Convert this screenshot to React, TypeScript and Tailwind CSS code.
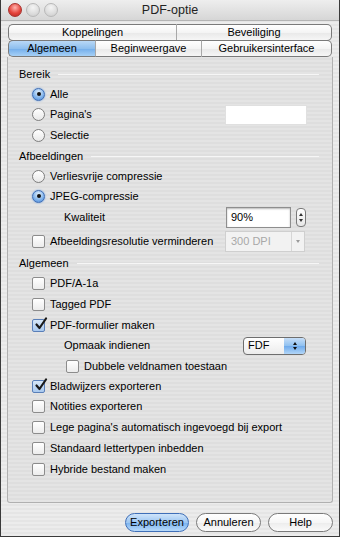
import React from 'react';

const font = { fontFamily: '"Liberation Sans", Arial, sans-serif' };

const Radio = ({ on }: { on?: boolean }) => (
  <span
    className={`w-[13px] h-[13px] rounded-full border flex items-center justify-center shrink-0 ${
      on
        ? 'border-[#3e6db5] bg-[radial-gradient(circle_at_50%_30%,#e3f0fc_0%,#7fb2ea_60%,#4a86d8_100%)] shadow-[0_0_2px_#6aa0e6]'
        : 'border-[#7d7d7d] bg-[linear-gradient(#ffffff,#e8e8e8)]'
    }`}
  >
    {on && <span className="w-[4px] h-[4px] rounded-full bg-[#111]" />}
  </span>
);

const Check = ({ on }: { on?: boolean }) => (
  <span
    className={`w-[13px] h-[13px] rounded-[2px] border shrink-0 relative ${
      on ? 'border-[#5a7fb8] bg-[linear-gradient(#d8e8f8,#a8c8ee)]' : 'border-[#8c8c8c] bg-[linear-gradient(#ffffff,#ececec)]'
    }`}
  >
    {on && (
      <svg viewBox="0 0 14 14" className="absolute left-[1px] -top-[3px] w-[14px] h-[14px]">
        <path d="M2.5 7.5 L5.5 11 L12 1.5" fill="none" stroke="#1a1a1a" strokeWidth="2.2" strokeLinecap="round" strokeLinejoin="round" />
      </svg>
    )}
  </span>
);

const Group = ({ label }: { label: string }) => (
  <div className="h-[20px] flex items-center pl-[11px] pr-[13px] gap-2">
    <span className="text-[11px] text-black">{label}</span>
    <span className="flex-1 h-px bg-[#c4c4c4] border-b border-[#f6f6f6]" />
  </div>
);

const Row = ({ h, children }: { h: string; children: React.ReactNode }) => (
  <div className={`${h} flex items-center pl-[24px] text-[11px] text-black`}>{children}</div>
);

const Tab = ({ label, w, sel, first, last }: { label: string; w: string; sel?: boolean; first?: boolean; last?: boolean }) => (
  <div
    className={`${w} h-full flex items-center justify-center text-[11px] text-black border-y border-[#7a7a7a] ${
      first ? 'border-l rounded-l-[5px]' : 'border-l border-l-[#a8a8a8]'
    } ${last ? 'border-r rounded-r-[5px]' : ''} ${
      sel
        ? 'bg-[linear-gradient(#b9d8f6_0%,#8ebfee_50%,#72adea_51%,#a6d0f6_100%)]'
        : 'bg-[linear-gradient(#ffffff_0%,#f4f4f4_50%,#e8e8e8_51%,#f6f6f6_100%)]'
    }`}
  >
    {label}
  </div>
);

const Btn = ({ label, w, blue }: { label: string; w: string; blue?: boolean }) => (
  <div
    className={`${w} h-[19px] rounded-full border flex items-center justify-center text-[11px] text-black ${
      blue
        ? 'border-[#3f6fb8] bg-[linear-gradient(#cfe4fa_0%,#9cc6f2_50%,#7ab2ee_51%,#b8dafa_100%)]'
        : 'border-[#7a7a7a] bg-[linear-gradient(#ffffff_0%,#f6f6f6_50%,#ececec_51%,#fafafa_100%)]'
    }`}
  >
    {label}
  </div>
);

export default function App() {
  return (
    <div
      style={font}
      className="w-[340px] h-[537px] border border-t-0 border-[#3a3a3a] bg-[repeating-linear-gradient(0deg,#ececec_0px,#ececec_2px,#e5e5e5_2px,#e5e5e5_4px)] flex flex-col overflow-hidden"
    >
      {/* title bar */}
      <div className="h-[21px] shrink-0 relative flex items-center justify-center bg-[linear-gradient(#eeeeee,#d6d6d6)] border-b border-[#b4b4b4]">
        <div className="absolute left-[7px] top-[3px] flex gap-[4px]">
          <span className="w-[14px] h-[14px] rounded-full border border-[#a8322e] bg-[radial-gradient(circle_at_50%_30%,#ffb3ad_0%,#e5453d_55%,#b52620_100%)]" />
          <span className="w-[14px] h-[14px] rounded-full border border-[#b8b8b8] bg-[radial-gradient(circle_at_50%_30%,#f4f4f4_0%,#dcdcdc_60%,#c8c8c8_100%)]" />
          <span className="w-[14px] h-[14px] rounded-full border border-[#b8b8b8] bg-[radial-gradient(circle_at_50%_30%,#f4f4f4_0%,#dcdcdc_60%,#c8c8c8_100%)]" />
        </div>
        <span className="text-[12.5px] text-[#222]">PDF-optie</span>
      </div>

      {/* tabs */}
      <div className="px-[7px] pt-[3px] flex flex-col">
        <div className="h-[17px] flex">
          <Tab label="Koppelingen" w="w-[168px]" first />
          <Tab label="Beveiliging" w="flex-1" last />
        </div>
        <div className="h-[17px] flex -mt-px">
          <Tab label="Algemeen" w="w-[87px]" sel first />
          <Tab label="Beginweergave" w="w-[106px]" />
          <Tab label="Gebruikersinterface" w="flex-1" last />
        </div>
      </div>

      {/* panel */}
      <div className="mx-[6px] h-[446px] border border-t-0 border-[#b0b0b0] rounded-b-[3px] bg-[repeating-linear-gradient(0deg,#e4e4e4_0px,#e4e4e4_2px,#dedede_2px,#dedede_4px)] pt-[7px] flex flex-col">
        <Group label="Bereik" />
        <Row h="h-[20px]">
          <Radio on />
          <span className="ml-[5px]">Alle</span>
        </Row>
        <Row h="h-[21px]">
          <Radio />
          <span className="ml-[5px]">Pagina's</span>
          <span className="ml-auto mr-[25px] w-[82px] h-[20px] bg-white border border-[#e0e0e0]" />
        </Row>
        <Row h="h-[21px]">
          <Radio />
          <span className="ml-[5px]">Selectie</span>
        </Row>
        <Group label="Afbeeldingen" />
        <Row h="h-[20px]">
          <Radio />
          <span className="ml-[5px]">Verliesvrije compressie</span>
        </Row>
        <Row h="h-[20px]">
          <Radio on />
          <span className="ml-[5px]">JPEG-compressie</span>
        </Row>
        <Row h="h-[23px]">
          <span className="ml-[32px]">Kwaliteit</span>
          <span className="ml-auto w-[65px] h-[21px] bg-white border border-[#8e8e8e] shadow-[inset_0_1px_2px_#b8b8b8] flex items-center pl-[4px]">90%</span>
          <span className="ml-[5px] mr-[26px] w-[10px] h-[19px] rounded-[4px] border border-[#7a7a7a] bg-[linear-gradient(#ffffff,#e6e6e6)] flex flex-col items-center justify-center gap-[3px]">
            <span className="w-0 h-0 border-x-[2.5px] border-x-transparent border-b-[3px] border-b-[#333]" />
            <span className="w-0 h-0 border-x-[2.5px] border-x-transparent border-t-[3px] border-t-[#333]" />
          </span>
        </Row>
        <Row h="h-[24px]">
          <Check />
          <span className="ml-[5px]">Afbeeldingsresolutie verminderen</span>
          <span className="ml-auto mr-[27px] w-[80px] h-[21px] bg-[#f2f2f2] border border-[#cfcfcf] flex items-center">
            <span className="flex-1 pl-[5px] text-[#a8a8a8]">300 DPI</span>
            <span className="w-[13px] h-full border-l border-[#d6d6d6] flex items-center justify-center">
              <span className="w-0 h-0 border-x-[2.5px] border-x-transparent border-t-[3px] border-t-[#9a9a9a]" />
            </span>
          </span>
        </Row>
        <Group label="Algemeen" />
        <Row h="h-[21px]">
          <Check />
          <span className="ml-[5px]">PDF/A-1a</span>
        </Row>
        <Row h="h-[21px]">
          <Check />
          <span className="ml-[5px]">Tagged PDF</span>
        </Row>
        <Row h="h-[20px]">
          <Check on />
          <span className="ml-[5px]">PDF-formulier maken</span>
        </Row>
        <Row h="h-[21px]">
          <span className="ml-[32px]">Opmaak indienen</span>
          <span className="ml-auto mr-[26px] w-[63px] h-[18px] rounded-[4px] border border-[#6e6e6e] bg-[linear-gradient(#ffffff,#ececec)] flex items-center overflow-hidden">
            <span className="flex-1 pl-[4px]">FDF</span>
            <span className="w-[21px] h-full bg-[linear-gradient(#c6def8_0%,#8ec0f0_50%,#6eaaec_51%,#b2d6f8_100%)] flex flex-col items-center justify-center gap-[2px]">
              <span className="w-0 h-0 border-x-[2.5px] border-x-transparent border-b-[3px] border-b-[#111]" />
              <span className="w-0 h-0 border-x-[2.5px] border-x-transparent border-t-[3px] border-t-[#111]" />
            </span>
          </span>
        </Row>
        <Row h="h-[20px]">
          <span className="ml-[34px] flex items-center">
            <Check />
            <span className="ml-[5px]">Dubbele veldnamen toestaan</span>
          </span>
        </Row>
        <Row h="h-[20px]">
          <Check on />
          <span className="ml-[5px]">Bladwijzers exporteren</span>
        </Row>
        <Row h="h-[21px]">
          <Check />
          <span className="ml-[5px]">Notities exporteren</span>
        </Row>
        <Row h="h-[21px]">
          <Check />
          <span className="ml-[5px]">Lege pagina's automatisch ingevoegd bij export</span>
        </Row>
        <Row h="h-[21px]">
          <Check />
          <span className="ml-[5px]">Standaard lettertypen inbedden</span>
        </Row>
        <Row h="h-[21px]">
          <Check />
          <span className="ml-[5px]">Hybride bestand maken</span>
        </Row>
      </div>

      {/* buttons */}
      <div className="flex justify-end gap-[7px] pr-[6px] mt-[10px]">
        <Btn label="Exporteren" w="w-[64px]" blue />
        <Btn label="Annuleren" w="w-[65px]" />
        <Btn label="Help" w="w-[65px]" />
      </div>
    </div>
  );
}
